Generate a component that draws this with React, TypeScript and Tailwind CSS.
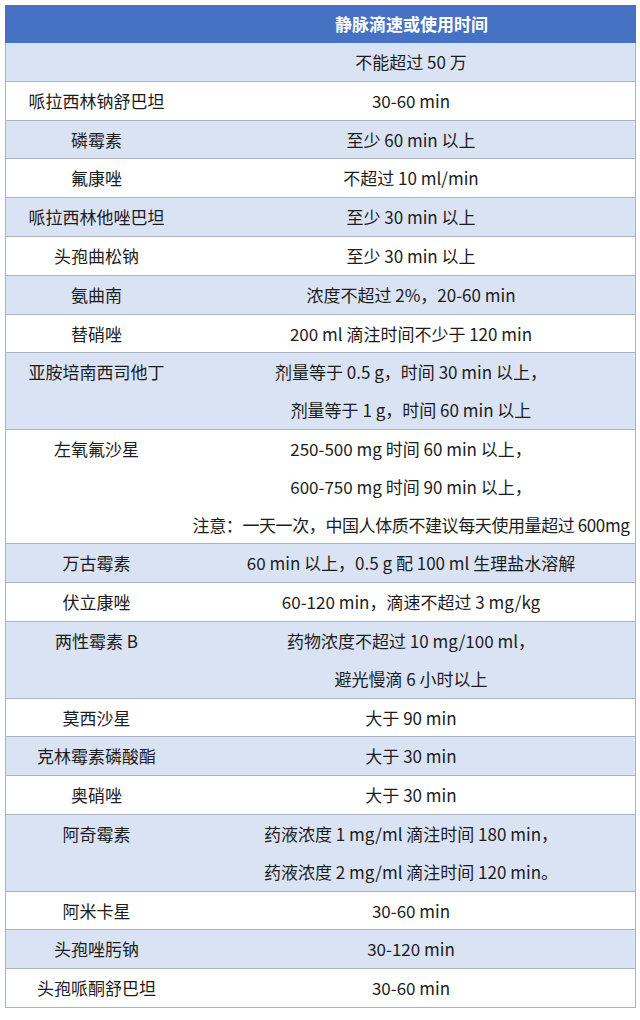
import React from 'react';

type Row = { name: string; lines: string[] };

const rows: Row[] = [
  { name: '', lines: ['不能超过 50 万'] },
  { name: '哌拉西林钠舒巴坦', lines: ['30-60 min'] },
  { name: '磷霉素', lines: ['至少 60 min 以上'] },
  { name: '氟康唑', lines: ['不超过 10 ml/min'] },
  { name: '哌拉西林他唑巴坦', lines: ['至少 30 min 以上'] },
  { name: '头孢曲松钠', lines: ['至少 30 min 以上'] },
  { name: '氨曲南', lines: ['浓度不超过 2%，20-60 min'] },
  { name: '替硝唑', lines: ['200 ml 滴注时间不少于 120 min'] },
  { name: '亚胺培南西司他丁', lines: ['剂量等于 0.5 g，时间 30 min 以上，', '剂量等于 1 g，时间 60 min 以上'] },
  {
    name: '左氧氟沙星',
    lines: ['250-500 mg 时间 60 min 以上，', '600-750 mg 时间 90 min 以上，', '注意：一天一次，中国人体质不建议每天使用量超过 600mg'],
  },
  { name: '万古霉素', lines: ['60 min 以上，0.5 g 配 100 ml 生理盐水溶解'] },
  { name: '伏立康唑', lines: ['60-120 min，滴速不超过 3 mg/kg'] },
  { name: '两性霉素 B', lines: ['药物浓度不超过 10 mg/100 ml，', '避光慢滴 6 小时以上'] },
  { name: '莫西沙星', lines: ['大于 90 min'] },
  { name: '克林霉素磷酸酯', lines: ['大于 30 min'] },
  { name: '奥硝唑', lines: ['大于 30 min'] },
  { name: '阿奇霉素', lines: ['药液浓度 1 mg/ml 滴注时间 180 min，', '药液浓度 2 mg/ml 滴注时间 120 min。'] },
  { name: '阿米卡星', lines: ['30-60 min'] },
  { name: '头孢唑肟钠', lines: ['30-120 min'] },
  { name: '头孢哌酮舒巴坦', lines: ['30-60 min'] },
];

export default function App() {
  return (
    <div
      className="w-[640px] h-[1020px] bg-white pt-[5px] text-[17px] text-[#1c1c1c]"
      style={{ fontFamily: '"Noto Sans CJK SC", "Noto Sans", sans-serif' }}
    >
      <div className="ml-[5px] w-[631px] border-x border-[#a9b3c4]">
        <div className="flex bg-[#4672c4] text-white font-bold leading-[38px] -mx-px">
          <div className="w-[182px] shrink-0"></div>
          <div className="flex-1 text-center whitespace-nowrap">静脉滴速或使用时间</div>
        </div>
        {rows.map((row, i) => (
          <div
            key={i}
            className={`flex border-b border-[#a9b3c4] leading-[37.8px] ${i % 2 === 0 ? 'bg-[#dae3f3]' : 'bg-white'}`}
          >
            <div className="w-[181px] shrink-0 text-center whitespace-nowrap">{row.name}</div>
            <div className="flex-1 flex flex-col items-center">
              {row.lines.map((line, j) => (
                <div key={j} className={`whitespace-nowrap ${line.startsWith('注意') ? 'tracking-[-0.4px]' : ''}`}>
                  {line}
                </div>
              ))}
            </div>
          </div>
        ))}
      </div>
    </div>
  );
}
